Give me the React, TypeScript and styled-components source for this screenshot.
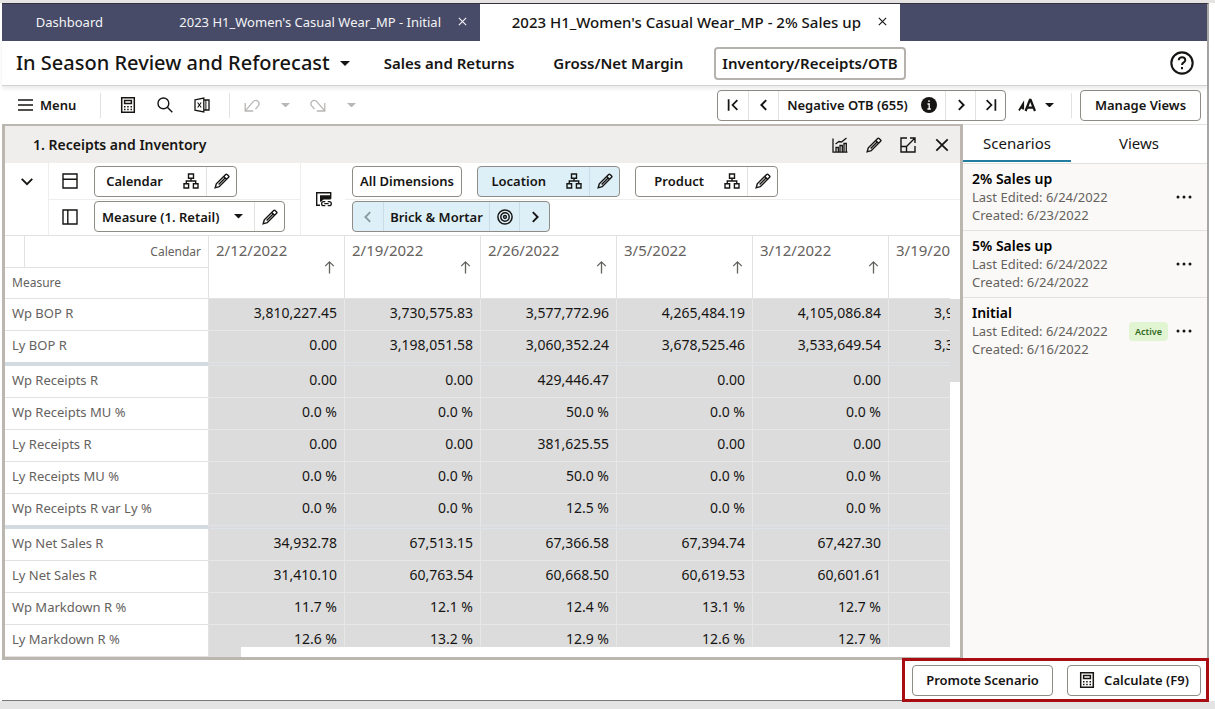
import React from "react";
import styled, { createGlobalStyle, css } from "styled-components";

const ink = "#161513";
const muted = "#65625e";
const line = "#e4e2e0";
const faint = "#efeeec";
const frame = "#bbb6b0";

const GlobalStyle = createGlobalStyle`
  *, *::before, *::after { box-sizing: border-box; }
  body { margin: 0; background: #fff; }
  body, button, select {
    font-family: "Noto Sans", "Open Sans", sans-serif;
    font-size: 14px;
    line-height: 18px;
    color: ${ink};
  }
  button { margin: 0; padding: 0; border: 0; background: none; cursor: pointer; }
  svg { display: block; flex: none; }
`;

/* ---------- shell ---------- */

const Page = styled.div`
  min-height: 100vh;
  display: flex;
  flex-direction: column;
  border-top: 3px solid #e6e4e2;
  border-bottom: 8px solid #e4e4e4;
`;

const Window = styled.div`
  flex: 1;
  display: flex;
  flex-direction: column;
  margin: 0 6px 0 2px;
  border-top: 1px solid #34323e;
  border-right: 2px solid #a9a6a3;
  border-bottom: 1px solid #77777a;
`;

const TabBar = styled.nav`
  display: flex;
  height: 37px;
  background: #474b68;
`;

const Tab = styled.div<{ $w: number; $active?: boolean }>`
  display: flex;
  align-items: center;
  justify-content: flex-end;
  gap: 15px;
  width: ${(p) => p.$w}px;
  padding: 0 12px 2px 0;
  background: ${(p) => (p.$active ? "#fff" : "transparent")};
  color: ${(p) => (p.$active ? ink : "#f3f3f6")};
`;

const TabLink = styled.a<{ $active?: boolean }>`
  flex: ${(p) => (p.$active ? "none" : "1")};
  text-align: right;
  color: inherit;
  text-decoration: none;
  white-space: nowrap;
  font-size: ${(p) => (p.$active ? 15 : 13)}px;
  font-weight: ${(p) => (p.$active ? 500 : 400)};
`;

const TabClose = styled.button`
  display: grid;
  place-items: center;
  width: 12px;
  height: 18px;
  color: inherit;
`;

const TitleBar = styled.header`
  display: flex;
  align-items: center;
  height: 45px;
  padding: 0 13px 0 14px;
  border-bottom: 1px solid #d2d0ce;
  position: relative;
  box-shadow: 0 3px 4px rgba(0, 0, 0, 0.08);
`;

const TitleButton = styled.button`
  display: flex;
  align-items: center;
  gap: 10px;
  margin-right: 26px;
  font-size: 20px;
  line-height: 28px;
  font-weight: 500;
  white-space: nowrap;
`;

const StepLinks = styled.nav`
  display: flex;
  align-items: center;
  gap: 23px;
  flex: 1;
`;

const StepLink = styled.a<{ $active?: boolean }>`
  display: flex;
  align-items: center;
  height: 33px;
  padding: 0 6px;
  border: 2px solid ${(p) => (p.$active ? "#b5b1ac" : "transparent")};
  border-radius: 4px;
  color: ${ink};
  font-size: 15px;
  font-weight: 600;
  text-decoration: none;
  white-space: nowrap;
`;

/* ---------- toolbar ---------- */

const Toolbar = styled.div`
  display: flex;
  align-items: center;
  height: 38px;
  padding: 0 6px 0 15px;
`;

const ToolGroup = styled.div`
  display: flex;
  align-items: center;
  gap: 13px;
`;

const IconButton = styled.button<{ $w?: number; $muted?: boolean }>`
  display: grid;
  place-items: center;
  width: ${(p) => p.$w ?? 24}px;
  height: 24px;
  color: ${(p) => (p.$muted ? "#b9b7b5" : ink)};
`;

const MenuButton = styled.button`
  display: flex;
  align-items: center;
  gap: 7px;
  width: 63px;
  font-size: 13px;
  font-weight: 600;
`;

const TextSize = styled.button`
  display: flex;
  align-items: center;
  gap: 9px;
  margin-left: 12px;
`;

const Rule = styled.span<{ $l: number; $r: number }>`
  width: 1px;
  height: 25px;
  margin: 0 ${(p) => p.$r}px 0 ${(p) => p.$l}px;
  background: ${line};
`;

const Spacer = styled.span`
  flex: 1;
`;

const OutlineButton = styled.button<{ $w: number }>`
  display: flex;
  align-items: center;
  justify-content: center;
  gap: 9px;
  flex: none;
  width: ${(p) => p.$w}px;
  height: 31px;
  border: 1px solid #8f8b86;
  border-radius: 4px;
  background: #fff;
  font-size: 13px;
  font-weight: 600;
  white-space: nowrap;
`;

const Chip = styled.div<{ $w: number; $on?: boolean }>`
  display: flex;
  align-items: stretch;
  flex: none;
  width: ${(p) => p.$w}px;
  height: 31px;
  border: 1px solid #8f8b86;
  border-radius: 4px;
  background: ${(p) => (p.$on ? "#def0f7" : "#fff")};
  overflow: hidden;
  & > * + * {
    border-left: 1px solid ${(p) => (p.$on ? "#c8dde5" : line)};
  }
`;

const chipPart = css`
  display: flex;
  align-items: center;
  justify-content: center;
  font-size: 13px;
  font-weight: 600;
  white-space: nowrap;
`;

const ChipLabel = styled.button`
  ${chipPart}
  flex: 1;
  justify-content: flex-end;
  gap: 20px;
  padding-right: 7px;
`;

const ChipText = styled.span`
  ${chipPart}
  flex: 1;
  gap: 13px;
`;

const ChipIcon = styled.button<{ $muted?: boolean }>`
  ${chipPart}
  width: 30px;
  color: ${(p) => (p.$muted ? "#8b9aa2" : ink)};
`;

const SelectBox = styled.label`
  ${chipPart}
  flex: 1;
  padding-right: 11px;
`;

const Select = styled.select`
  flex: 1;
  appearance: none;
  border: 0;
  padding: 0 0 0 7px;
  background: none;
  font-size: 13px;
  font-weight: 600;
  outline: 0;
`;

/* ---------- pivot panel ---------- */

const Main = styled.main`
  flex: 1;
  display: flex;
  align-items: stretch;
`;

const Panel = styled.section`
  flex: 1;
  min-width: 0;
  border: 3px solid ${frame};
  border-top-width: 2px;
`;

const PanelHead = styled.div`
  display: flex;
  align-items: center;
  gap: 10px;
  height: 37px;
  padding: 0 6px 0 28px;
  background: #f0eeec;
`;

const PanelTitle = styled.h2`
  flex: 1;
  margin: 0;
  font-size: 14px;
  line-height: 18px;
  font-weight: 600;
`;

const Config = styled.div`
  display: grid;
  grid-template-columns: 44px 252px 44px 1fr;
  border-bottom: 1px solid ${line};
`;

const ConfigCell = styled.div<{ $line?: boolean }>`
  display: grid;
  place-items: center;
  border-right: ${(p) => (p.$line ? `1px solid ${faint}` : "0")};
`;

const ConfigToggle = styled.button`
  align-self: start;
  display: grid;
  place-items: center;
  width: 24px;
  height: 36px;
`;

const ConfigRows = styled.div<{ $line?: boolean }>`
  display: grid;
  grid-template-rows: 36px 36px;
  border-right: ${(p) => (p.$line ? `1px solid ${faint}` : "0")};
`;

const ConfigRow = styled.div<{ $lead?: boolean }>`
  display: flex;
  align-items: center;
  gap: ${(p) => (p.$lead ? 16 : 15)}px;
  padding-left: ${(p) => (p.$lead ? 13 : 7)}px;
  & + & {
    padding-bottom: 2px;
    border-top: 1px solid ${faint};
  }
`;

const GridArea = styled.div`
  position: relative;
  display: flex;
`;

const GridClip = styled.div`
  flex: 1;
  min-width: 0;
  overflow: hidden;
`;

const Table = styled.table`
  width: 100%;
  min-width: 944px;
  table-layout: fixed;
  border-collapse: separate;
  border-spacing: 0;
`;

const Col = styled.col<{ $w?: number }>`
  width: ${(p) => (p.$w ? `${p.$w}px` : "auto")};
`;

const cornerCell = css`
  padding: 0 7px;
  border-right: 1px solid ${line};
  border-bottom: 1px solid ${line};
  color: ${muted};
  font-size: 12px;
  font-weight: 400;
`;

const CornerTop = styled.th`
  ${cornerCell}
  height: 32px;
  text-align: right;
  background: linear-gradient(${line}, ${line}) 19px 0 / 1px 100% no-repeat;
`;

const CornerBottom = styled.th`
  ${cornerCell}
  height: 31px;
  text-align: left;
`;

const DateHead = styled.th`
  padding: 4px 9px 0 7px;
  border-right: 1px solid ${line};
  border-bottom: 1px solid ${line};
  color: ${muted};
  font-size: 15px;
  line-height: 20px;
  font-weight: 400;
  text-align: left;
  vertical-align: top;
  overflow: hidden;
  &:last-child { border-right: 0; }
`;

const SortButton = styled.button`
  display: block;
  margin-left: auto;
  color: ${muted};
`;

const RowHead = styled.th<{ $end?: boolean }>`
  height: ${(p) => (p.$end ? 35 : 32)}px;
  padding: 0 7px 3px;
  border-right: 1px solid ${line};
  border-bottom: ${(p) => (p.$end ? "4px solid #d3dae0" : `1px solid ${line}`)};
  color: ${muted};
  font-size: 13px;
  font-weight: 400;
  text-align: left;
  white-space: nowrap;
`;

const Cell = styled.td<{ $end?: boolean; $cut?: boolean }>`
  padding: 0 ${(p) => (p.$cut ? 0 : 7)}px 3px ${(p) => (p.$cut ? 45 : 0)}px;
  border-right: ${(p) => (p.$cut ? "0" : "1px solid #e6e7e8")};
  border-bottom: ${(p) => (p.$end ? "4px double #dde3e8" : "1px solid #e6e7e8")};
  background: #dcdcdc;
  font-size: 14px;
  text-align: ${(p) => (p.$cut ? "left" : "right")};
  white-space: nowrap;
  overflow: hidden;
`;

const VScroll = styled.div`
  width: 10px;
  padding-top: 63px;
`;

const VThumb = styled.div`
  height: 83px;
  background: #dcdcdc;
`;

/* Horizontal scroll bar floats over the bottom of the data cells. */
const HScroll = styled.div`
  position: absolute;
  left: 204px;
  right: 0;
  bottom: 0;
  height: 10px;
  background: #fff;
`;

const HThumb = styled.div`
  width: 32px;
  height: 10px;
  background: #dcdcdc;
`;

/* ---------- side panel ---------- */

const Side = styled.aside`
  width: 244px;
  flex: none;
  background: #faf9f7;
  border-top: 1px solid ${line};
`;

const SideTabs = styled.div`
  display: flex;
  height: 39px;
  background: #fff;
  border-bottom: 1px solid ${line};
`;

const SideTab = styled.button<{ $active?: boolean }>`
  width: ${(p) => (p.$active ? "108px" : "auto")};
  flex: ${(p) => (p.$active ? "none" : "1")};
  height: 37px;
  border-bottom: 2px solid ${(p) => (p.$active ? "#227e9e" : "transparent")};
  font-size: 15px;
`;

const ScenarioList = styled.ul`
  margin: 0;
  padding: 0;
  list-style: none;
`;

const Scenario = styled.li`
  display: flex;
  align-items: center;
  gap: 4px;
  padding: 6px 11px 6px 9px;
  color: ${muted};
  font-size: 13px;
  & + & {
    border-top: 1px solid ${line};
  }
`;

const ScenarioText = styled.div`
  flex: 1;
`;

const ScenarioName = styled.h3`
  margin: 0;
  color: #000;
  font-size: 14px;
  line-height: 18px;
  font-weight: 600;
`;

const Badge = styled.span`
  padding: 0 6px;
  border-radius: 4px;
  background: #e1f5d2;
  color: #33691e;
  font-size: 9px;
  line-height: 19px;
  font-weight: 600;
`;

/* ---------- footer ---------- */

const Footer = styled.footer`
  position: relative;
  display: flex;
  justify-content: flex-end;
  align-items: center;
  gap: 14px;
  height: 40px;
  padding-right: 6px;
`;

/* Red call-out drawn over the footer actions. */
const Callout = styled.div`
  position: absolute;
  top: -2px;
  right: -2px;
  bottom: -2px;
  width: 307px;
  border: 3px solid #a80d12;
  pointer-events: none;
`;

/* ---------- icons ---------- */

type IconProps = { size?: number; w?: number; children: React.ReactNode };
const Icon = ({ size = 16, w = 1.4, children }: IconProps) => (
  <svg width={size} height={size} viewBox="0 0 16 16" fill="none" stroke="currentColor" strokeWidth={w} aria-hidden="true">
    {children}
  </svg>
);

const Caret = ({ size = 10 }: { size?: number }) => (
  <svg width={size} height={size / 2} viewBox="0 0 10 5" fill="currentColor" aria-hidden="true">
    <path d="M0 0h10L5 5z" />
  </svg>
);
const CloseIcon = ({ size = 9, w = 2 }: { size?: number; w?: number }) => (
  <Icon size={size} w={w}><path d="M1.5 1.5l13 13M14.5 1.5l-13 13" /></Icon>
);
const CalcIcon = () => (
  <Icon w={1.5}>
    <path d="M1.7.8h12.6v14.4H1.7z" />
    <path d="M4.6 3.6h6.8v3H4.600z" />
    <path d="M4 9.700h1.500M7.200 9.700h1.500M10.500 9.700H12M4 12.400h1.500M7.200 12.400h1.500M10.500 12.400H12" />
  </Icon>
);
const SearchIcon = () => (
  <Icon><circle cx="6.400" cy="6.400" r="5.400" /><path d="M10.300 10.300l5 5" /></Icon>
);
const ExcelIcon = () => (
  <Icon w={1.3}>
    <path d="M1 2.800L9.800 1v14L1 13.200zM9.800 3h5.200v10H9.800" />
    <path d="M3.600 5.500l3.600 5M7.200 5.500l-3.600 5" strokeWidth="1.100" />
    <path d="M11.900 3v10" strokeWidth="1" />
  </Icon>
);
const UndoIcon = () => (
  <Icon w={1.3}><path d="M1.200 6v8h8M1.500 13.700L9.200 4.600c1.400-1.600 3.600-1.600 4.900-.2 1.300 1.400 1.200 3.300 0 4.800L11.500 12" /></Icon>
);
const RedoIcon = () => (
  <Icon w={1.3}><path d="M14.800 6v8h-8M14.500 13.700L6.800 4.600C5.400 3 3.200 3 1.900 4.400.6 5.800.7 7.700 1.900 9.200L4.500 12" /></Icon>
);
const Chevron = ({ d = "r", size = 14 }: { d?: "l" | "r" | "d"; size?: number }) => (
  <Icon size={size} w={2.2}>
    <path d={d === "l" ? "M10.500 2.500L5 8l5.500 5.500" : d === "r" ? "M5.500 2.500L11 8l-5.500 5.500" : "M2 5.500L8 11.500l6-6"} />
  </Icon>
);
const FirstIcon = () => (
  <Icon size={14} w={2}><path d="M3 1.500v13M13 2.500L7.500 8l5.500 5.500" /></Icon>
);
const LastIcon = () => (
  <Icon size={14} w={2}><path d="M13 1.500v13M3 2.500L8.500 8L3 13.500" /></Icon>
);
const HelpIcon = () => (
  <Icon size={24}>
    <circle cx="8" cy="8" r="7.100" />
    <path d="M5.800 6.200c0-1.300 1-2.100 2.200-2.100s2.200.8 2.200 2c0 1.500-2.200 1.500-2.200 3.200M8 10.700v1.400" strokeWidth="1.300" />
  </Icon>
);
const InfoIcon = () => (
  <svg width="16" height="16" viewBox="0 0 16 16" aria-hidden="true">
    <circle cx="8" cy="8" r="8" fill={ink} />
    <path d="M8 3.200v1.800M6.500 7h1.700v5M6.400 12h3.400" stroke="#fff" strokeWidth="1.300" fill="none" />
  </svg>
);
const TextSizeIcon = () => (
  <svg width="18" height="14" viewBox="0 0 18 14" fill="none" stroke="currentColor" aria-hidden="true">
    <path d="M7.600 13L11.900 1.800h.7L17 13M9.300 9.600h6" strokeWidth="2.300" />
    <path d="M1 12.500L5.200 5.500v6M2.800 9.800h3" strokeWidth="1.800" />
  </svg>
);
const PencilIcon = () => (
  <Icon w={1.4}>
    <path d="M1.200 14.800l1.100-4L11.700 1.400c.4-.4 1-.4 1.400 0l1.500 1.500c.4.400.4 1 0 1.400L5.200 13.700z" />
    <path d="M9.700 3.400l2.900 2.900M11.100 4.900L4.600 11.400" />
  </Icon>
);
const TreeIcon = () => (
  <Icon><path d="M5.500 1h5v4.300h-5zM1 10.700h4.600V15H1zM10.400 10.700H15V15h-4.600zM8 5.300V8M3.300 10.700V8h9.400v2.700" /></Icon>
);
const ColumnAxisIcon = () => (
  <Icon><path d="M1 1h14v14H1zM1 6.200h14" /></Icon>
);
const RowAxisIcon = () => (
  <Icon><path d="M1 1h14v14H1zM5.800 1v14" /></Icon>
);
const LinkIcon = () => (
  <svg width="17" height="17" viewBox="0 0 17 17" fill="none" stroke="currentColor" strokeWidth="1.400" aria-hidden="true">
    <path d="M5 14.300H1.700V1.700h14v6" />
    <path d="M5 4.200h10.700v4.300H8.500L6 10.700H5z" fill="currentColor" stroke="none" />
    <path d="M10.300 10.700H8.600a2 2 0 0 0 0 4h1.700M12.700 10.700h1.600a2 2 0 0 1 0 4h-1.600M9.300 12.700h4.300" strokeWidth="1.300" />
  </svg>
);
const TargetIcon = () => (
  <Icon w={1.5}><circle cx="8" cy="8" r="7.100" /><circle cx="8" cy="8" r="4.200" /><circle cx="8" cy="8" r="1.400" /></Icon>
);
const ChartIcon = () => (
  <Icon w={1.3}><path d="M1 1.500v13.700h14.500M4 15v-4.500h2.300V15M8 15V8.500h2.300V15M12 15V6.500h2.300V15M3.500 7L7 4.500l2.500.5L14.500 1" /></Icon>
);
const ExpandIcon = () => (
  <Icon><path d="M7 1H1v14h14V9M10 1h5v5M15 1L6.500 9.500M1 9.500h5.500V15" /></Icon>
);
const ArrowUp = () => (
  <svg width="11" height="14" viewBox="0 0 11 14" fill="none" stroke="currentColor" strokeWidth="1.300" aria-hidden="true">
    <path d="M5.500 13.500V1.800M1.200 6.100l4.300-4.300 4.300 4.300" />
  </svg>
);
const MenuIcon = () => (
  <svg width="16" height="12" viewBox="0 0 16 12" stroke="currentColor" strokeWidth="1.300" aria-hidden="true">
    <path d="M1 1h15M1 6h15M1 11h15" />
  </svg>
);
const DotsIcon = () => (
  <svg width="16" height="4" viewBox="0 0 16 4" fill={ink} aria-hidden="true">
    <circle cx="2" cy="2" r="1.500" /><circle cx="8" cy="2" r="1.500" /><circle cx="14" cy="2" r="1.500" />
  </svg>
);

/* ---------- data ---------- */

const dates = ["2/12/2022", "2/19/2022", "2/26/2022", "3/5/2022", "3/12/2022"];

type Row = { name: string; values: string[]; next?: string; end?: boolean };
const rows: Row[] = [
  { name: "Wp BOP R", values: ["3,810,227.45", "3,730,575.83", "3,577,772.96", "4,265,484.19", "4,105,086.84"], next: "3,9" },
  { name: "Ly BOP R", values: ["0.00", "3,198,051.58", "3,060,352.24", "3,678,525.46", "3,533,649.54"], next: "3,3", end: true },
  { name: "Wp Receipts R", values: ["0.00", "0.00", "429,446.47", "0.00", "0.00"] },
  { name: "Wp Receipts MU %", values: ["0.0 %", "0.0 %", "50.0 %", "0.0 %", "0.0 %"] },
  { name: "Ly Receipts R", values: ["0.00", "0.00", "381,625.55", "0.00", "0.00"] },
  { name: "Ly Receipts MU %", values: ["0.0 %", "0.0 %", "50.0 %", "0.0 %", "0.0 %"] },
  { name: "Wp Receipts R var Ly %", values: ["0.0 %", "0.0 %", "12.5 %", "0.0 %", "0.0 %"], end: true },
  { name: "Wp Net Sales R", values: ["34,932.78", "67,513.15", "67,366.58", "67,394.74", "67,427.30"] },
  { name: "Ly Net Sales R", values: ["31,410.10", "60,763.54", "60,668.50", "60,619.53", "60,601.61"] },
  { name: "Wp Markdown R %", values: ["11.7 %", "12.1 %", "12.4 %", "13.1 %", "12.7 %"] },
  { name: "Ly Markdown R %", values: ["12.6 %", "13.2 %", "12.9 %", "12.6 %", "12.7 %"] },
];

const scenarios = [
  { name: "2% Sales up", edited: "6/24/2022", created: "6/23/2022", active: false },
  { name: "5% Sales up", edited: "6/24/2022", created: "6/24/2022", active: false },
  { name: "Initial", edited: "6/24/2022", created: "6/16/2022", active: true },
];

const DimensionChip = ({ name, on }: { name: string; on?: boolean }) => (
  <Chip $w={143} $on={on}>
    <ChipLabel>{name}<TreeIcon /></ChipLabel>
    <ChipIcon aria-label={`Edit ${name}`}><PencilIcon /></ChipIcon>
  </Chip>
);

export default function App() {
  return (
    <Page>
      <GlobalStyle />
      <Window>
        <TabBar>
          <Tab $w={113}><TabLink href="#dashboard">Dashboard</TabLink></Tab>
          <Tab $w={365}>
            <TabLink href="#initial">2023 H1_Women's Casual Wear_MP - Initial</TabLink>
            <TabClose aria-label="Close tab"><CloseIcon /></TabClose>
          </Tab>
          <Tab $w={420} $active>
            <TabLink $active href="#sales-up">2023 H1_Women's Casual Wear_MP - 2% Sales up</TabLink>
            <TabClose aria-label="Close tab"><CloseIcon /></TabClose>
          </Tab>
        </TabBar>

        <TitleBar>
          <TitleButton>In Season Review and Reforecast<Caret /></TitleButton>
          <StepLinks>
            <StepLink href="#sales">Sales and Returns</StepLink>
            <StepLink href="#margin">Gross/Net Margin</StepLink>
            <StepLink href="#inventory" $active>Inventory/Receipts/OTB</StepLink>
          </StepLinks>
          <IconButton aria-label="Help"><HelpIcon /></IconButton>
        </TitleBar>

        <Toolbar>
          <MenuButton><MenuIcon />Menu</MenuButton>
          <Rule $l={20} $r={15} />
          <ToolGroup>
            <IconButton aria-label="Calculate"><CalcIcon /></IconButton>
            <IconButton aria-label="Search"><SearchIcon /></IconButton>
            <IconButton aria-label="Export to Excel"><ExcelIcon /></IconButton>
          </ToolGroup>
          <Rule $l={15} $r={10} />
          <ToolGroup>
            <IconButton $muted aria-label="Undo"><UndoIcon /></IconButton>
            <IconButton $muted $w={16} aria-label="Undo list"><Caret size={9} /></IconButton>
            <IconButton $muted aria-label="Redo"><RedoIcon /></IconButton>
            <IconButton $muted $w={16} aria-label="Redo list"><Caret size={9} /></IconButton>
          </ToolGroup>
          <Spacer />
          <Chip $w={289}>
            <ChipIcon aria-label="First"><FirstIcon /></ChipIcon>
            <ChipIcon aria-label="Previous"><Chevron d="l" /></ChipIcon>
            <ChipText>Negative OTB (655)<InfoIcon /></ChipText>
            <ChipIcon aria-label="Next"><Chevron /></ChipIcon>
            <ChipIcon aria-label="Last"><LastIcon /></ChipIcon>
          </Chip>
          <TextSize aria-label="Text size"><TextSizeIcon /><Caret size={9} /></TextSize>
          <Rule $l={17} $r={8} />
          <OutlineButton $w={121}>Manage Views</OutlineButton>
        </Toolbar>

        <Main>
          <Panel>
            <PanelHead>
              <PanelTitle>1. Receipts and Inventory</PanelTitle>
              <IconButton aria-label="Chart"><ChartIcon /></IconButton>
              <IconButton aria-label="Edit view"><PencilIcon /></IconButton>
              <IconButton aria-label="Expand"><ExpandIcon /></IconButton>
              <IconButton aria-label="Close view"><CloseIcon size={14} w={2} /></IconButton>
            </PanelHead>

            <Config>
              <ConfigCell $line><ConfigToggle aria-label="Collapse"><Chevron d="d" /></ConfigToggle></ConfigCell>
              <ConfigRows $line>
                <ConfigRow $lead><ColumnAxisIcon /><DimensionChip name="Calendar" /></ConfigRow>
                <ConfigRow $lead>
                  <RowAxisIcon />
                  <Chip $w={191}>
                    <SelectBox>
                      <Select aria-label="Measure profile" defaultValue="r">
                        <option value="r">Measure (1. Retail)</option>
                      </Select>
                      <Caret size={9} />
                    </SelectBox>
                    <ChipIcon aria-label="Edit measures"><PencilIcon /></ChipIcon>
                  </Chip>
                </ConfigRow>
              </ConfigRows>
              <ConfigCell><IconButton aria-label="Synchronize"><LinkIcon /></IconButton></ConfigCell>
              <ConfigRows>
                <ConfigRow>
                  <OutlineButton $w={110}>All Dimensions</OutlineButton>
                  <DimensionChip name="Location" on />
                  <DimensionChip name="Product" />
                </ConfigRow>
                <ConfigRow>
                  <Chip $w={198} $on>
                    <ChipIcon $muted aria-label="Previous location"><Chevron d="l" /></ChipIcon>
                    <ChipText>Brick &amp; Mortar</ChipText>
                    <ChipIcon aria-label="Focus location"><TargetIcon /></ChipIcon>
                    <ChipIcon aria-label="Next location"><Chevron /></ChipIcon>
                  </Chip>
                </ConfigRow>
              </ConfigRows>
            </Config>

            <GridArea>
              <GridClip>
                <Table>
                  <colgroup>
                    <Col $w={204} />
                    {dates.map((d) => <Col key={d} $w={136} />)}
                    <Col />
                  </colgroup>
                  <thead>
                    <tr>
                      <CornerTop scope="col">Calendar</CornerTop>
                      {dates.map((d) => (
                        <DateHead key={d} scope="col" rowSpan={2}>
                          {d}
                          <SortButton aria-label={`Sort by ${d}`}><ArrowUp /></SortButton>
                        </DateHead>
                      ))}
                      <DateHead scope="col" rowSpan={2}>3/19/20</DateHead>
                    </tr>
                    <tr><CornerBottom scope="col">Measure</CornerBottom></tr>
                  </thead>
                  <tbody>
                    {rows.map((r) => (
                      <tr key={r.name}>
                        <RowHead scope="row" $end={r.end}>{r.name}</RowHead>
                        {r.values.map((v, i) => <Cell key={dates[i]} $end={r.end}>{v}</Cell>)}
                        <Cell $end={r.end} $cut>{r.next}</Cell>
                      </tr>
                    ))}
                  </tbody>
                </Table>
              </GridClip>
              <VScroll><VThumb /></VScroll>
              <HScroll><HThumb /></HScroll>
            </GridArea>
          </Panel>

          <Side>
            <SideTabs role="tablist">
              <SideTab role="tab" aria-selected="true" $active>Scenarios</SideTab>
              <SideTab role="tab" aria-selected="false">Views</SideTab>
            </SideTabs>
            <ScenarioList>
              {scenarios.map((s) => (
                <Scenario key={s.name}>
                  <ScenarioText>
                    <ScenarioName>{s.name}</ScenarioName>
                    <div>Last Edited: {s.edited}</div>
                    <div>Created: {s.created}</div>
                  </ScenarioText>
                  {s.active && <Badge>Active</Badge>}
                  <IconButton aria-label={`Actions for ${s.name}`}><DotsIcon /></IconButton>
                </Scenario>
              ))}
            </ScenarioList>
          </Side>
        </Main>

        <Footer>
          <OutlineButton $w={141}>Promote Scenario</OutlineButton>
          <OutlineButton $w={134}><CalcIcon />Calculate (F9)</OutlineButton>
          <Callout />
        </Footer>
      </Window>
    </Page>
  );
}
